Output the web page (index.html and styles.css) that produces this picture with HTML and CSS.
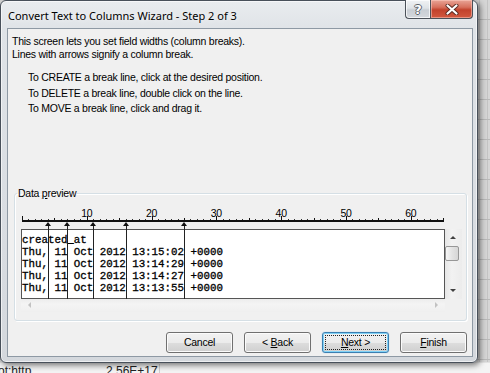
FILE: index.html
```html
<!DOCTYPE html>
<html lang="en">
<head>
  <meta charset="UTF-8">
  <title>Convert Text to Columns Wizard</title>
  <link rel="stylesheet" href="styles.css">
</head>
<body>

  <div class="desktop">

    <!-- Spreadsheet behind the dialog -->
    <div class="sheet">
      <div class="sheet-row">
        <span class="cell cell-a">ot:http</span>
        <span class="cell cell-b">2.56E+17</span>
        <span class="cell cell-c"></span>
      </div>
    </div>

    <!-- Wizard window -->
    <div class="dialog">
      <div class="titlebar">
        <span class="title">Convert Text to Columns Wizard - Step 2 of 3</span>
        <div class="caption-buttons">
          <button class="cap cap-help">?</button>
          <button class="cap cap-close">
            <svg width="14" height="11" viewBox="0 0 14 11">
              <path d="M2.5 1.5 L11.5 9.5 M11.5 1.5 L2.5 9.5" stroke="#5a2a22" stroke-width="4" stroke-linecap="round"/>
              <path d="M2.5 1.5 L11.5 9.5 M11.5 1.5 L2.5 9.5" stroke="#ffffff" stroke-width="2.2" stroke-linecap="round"/>
            </svg>
          </button>
        </div>
      </div>

      <div class="client">
        <p class="intro">
          This screen lets you set field widths (column breaks).<br>
          Lines with arrows signify a column break.
        </p>

        <ul class="steps">
          <li>To CREATE a break line, click at the desired position.</li>
          <li>To DELETE a break line, double click on the line.</li>
          <li>To MOVE a break line, click and drag it.</li>
        </ul>

        <fieldset class="group">
          <legend>Data <u>p</u>review</legend>

          <div class="preview">
            <div class="ruler">
              <div class="ruler-labels">
                <span>10</span><span>20</span><span>30</span>
                <span>40</span><span>50</span><span>60</span>
              </div>
              <div class="ruler-ticks"></div>
            </div>

            <div class="preview-body">
              <pre class="data">created_at
Thu, 11 Oct 2012 13:15:02 +0000
Thu, 11 Oct 2012 13:14:29 +0000
Thu, 11 Oct 2012 13:14:27 +0000
Thu, 11 Oct 2012 13:13:55 +0000</pre>
              <div class="vscroll">
                <div class="arrow-btn"><span class="tri tri-up"></span></div>
                <div class="thumb"></div>
                <div class="track"></div>
                <div class="arrow-btn"><span class="tri tri-down"></span></div>
              </div>
            </div>

            <div class="hscroll">
              <span class="tri tri-left"></span>
              <span class="tri tri-right"></span>
            </div>

            <!-- column breaks, by character position -->
            <div class="break" style="--col: 4"></div>
            <div class="break" style="--col: 7"></div>
            <div class="break" style="--col: 11"></div>
            <div class="break" style="--col: 16"></div>
            <div class="break" style="--col: 25"></div>
          </div>
        </fieldset>

        <div class="buttons">
          <button class="btn">Cancel</button>
          <button class="btn">&lt; <u>B</u>ack</button>
          <button class="btn btn-default"><span class="focus"><u>N</u>ext &gt;</span></button>
          <button class="btn"><u>F</u>inish</button>
        </div>
      </div>
    </div>

  </div>

</body>
</html>
```

FILE: styles.css
```css
* {
  box-sizing: border-box;
  margin: 0;
  padding: 0;
}

body {
  font-family: 'Liberation Sans', Arial, sans-serif;
  font-size: 10.5px;
  letter-spacing: -0.25px;
  color: #000;
  background: #d9d9d9;
}

.desktop {
  position: relative;
  width: 490px;
  height: 373px;
  overflow: hidden;
  background:
    repeating-linear-gradient(to bottom, transparent 0 19px, #b9b9b9 19px 20px),
    repeating-linear-gradient(to right, transparent 0 7px, #c4c4c4 7px 8px),
    #d6d6d6;
  display: flex;
  flex-direction: column;
  justify-content: flex-end;
}

/* spreadsheet row peeking out under the dialog */
.sheet {
  background: #f4f4f4;
  border-top: 1px solid #e2e2e2;
  padding-top: 1px;
}

.sheet-row {
  display: flex;
  height: 9px;
  overflow: visible;
}

.cell {
  font-size: 12px;
  letter-spacing: 0;
  line-height: 14px;
  color: #222;
  white-space: nowrap;
}

.cell-a {
  width: 108px;
  margin-left: -2px;
}

.cell-b {
  width: 54px;
  border-right: 1px solid #d0d0d0;
}

/* dialog window */
.dialog {
  position: absolute;
  left: 0;
  top: 0;
  width: 478px;
  height: 363px;
  border: 1px solid #48505a;
  border-radius: 6px;
  background: linear-gradient(to bottom, #e9ecef 0%, #dfe3e7 8%, #d9dde2 60%, #d4d8dd 100%);
  box-shadow: 2px 2px 6px rgba(0, 0, 0, 0.55), inset 0 0 0 1px rgba(255, 255, 255, 0.6);
  padding: 0 4px 5px 6px;
  display: flex;
  flex-direction: column;
}

.titlebar {
  height: 27px;
  display: flex;
  justify-content: space-between;
  align-items: flex-start;
}

.title {
  font-family: 'Noto Sans', sans-serif;
  font-size: 11px;
  letter-spacing: 0;
  line-height: 16px;
  padding: 7px 0 0 1px;
  color: #000;
  text-shadow: 0 0 6px rgba(255, 255, 255, 0.9);
}

.caption-buttons {
  display: flex;
  margin-top: -1px;
}

.cap {
  height: 19px;
  border: 1px solid #4b5159;
  border-top: none;
  font-family: 'DejaVu Sans', sans-serif;
  cursor: pointer;
  display: flex;
  align-items: center;
  justify-content: center;
}

.cap-help {
  width: 25px;
  border-right: none;
  border-radius: 0 0 0 4px;
  background: linear-gradient(to bottom, #f0f2f4 0%, #dfe3e7 45%, #c9ced4 55%, #d4d8dd 100%);
  box-shadow: inset 0 0 0 1px rgba(255, 255, 255, 0.7);
  color: #fff;
  font-size: 13px;
  font-weight: bold;
  text-shadow: 1px 0 0 #5d636a, -1px 0 0 #5d636a, 0 1px 0 #5d636a, 0 -1px 0 #5d636a;
}

.cap-close {
  width: 43px;
  border-radius: 0 0 4px 0;
  background: linear-gradient(to bottom, #e9a597 0%, #d7705d 40%, #c2422c 55%, #d2583f 100%);
  box-shadow: inset 0 0 0 1px rgba(255, 210, 200, 0.5);
}

.client {
  flex: 1;
  background: #f0f0f0;
  border: 1px solid #8e99a4;
  display: flex;
  flex-direction: column;
}

.intro {
  padding: 6px 0 0 4px;
  line-height: 13px;
}

.steps {
  list-style: none;
  padding-left: 20px;
  margin-top: 9px;
  line-height: 15.5px;
}

/* data preview group */
.group {
  margin: 70px 5px 0 6px;
  border: 1px solid #d5dfe5;
  border-radius: 3px;
  padding: 0 0 8px 0;
  box-shadow: inset 1px 1px 0 #ffffff, 1px 1px 0 #ffffff;
}

.group legend {
  margin-left: 2px;
  padding: 0 1px;
  line-height: 13px;
}

.preview {
  position: relative;
  margin: 6px 0 0 6px;
  width: 441px;
}

.ruler {
  height: 23px;
}

.ruler-labels {
  display: flex;
  height: 10px;
  padding-left: 33.4px;
  line-height: 14px;
}

.ruler-labels span {
  width: 64.8px;
  flex: none;
  text-align: center;
}

.ruler-ticks {
  margin-left: 1px;
  width: 422px;
  height: 6px;
  background:
    linear-gradient(#111, #111) left bottom / 100% 2px no-repeat,
    repeating-linear-gradient(to right, #111 0 1px, transparent 1px 64.8px) left bottom / 100% 6px no-repeat,
    repeating-linear-gradient(to right, #111 0 1px, transparent 1px 32.4px) left bottom / 100% 4px no-repeat,
    repeating-linear-gradient(to right, #333 0 1px, transparent 1px 6.48px) left bottom / 100% 3px no-repeat;
}

.preview-body {
  display: flex;
  height: 70px;
}

.data {
  width: 424px;
  border: 1px solid #555;
  background: #fff;
  font-family: 'Liberation Mono', 'Courier New', monospace;
  font-size: 10.8px;
  letter-spacing: 0;
  line-height: 12px;
  padding-top: 4px;
  overflow: hidden;
  -webkit-text-stroke: 0.3px #000;
}

.vscroll {
  width: 17px;
  background: linear-gradient(to right, #e6e6e6, #f2f2f2 40%, #ececec);
  display: flex;
  flex-direction: column;
}

.arrow-btn {
  height: 17px;
  display: flex;
  align-items: center;
  justify-content: center;
}

.thumb {
  height: 15px;
  margin: 0 3px 0 0;
  border: 1px solid #979797;
  border-radius: 2px;
  background: linear-gradient(to right, #f6f6f6, #e3e3e3 50%, #d6d6d6);
}

.track {
  flex: 1;
}

.tri {
  width: 0;
  height: 0;
  display: inline-block;
}

.tri-up {
  border-left: 3px solid transparent;
  border-right: 3px solid transparent;
  border-bottom: 3px solid #404040;
  margin-right: 2px;
}

.tri-down {
  border-left: 3px solid transparent;
  border-right: 3px solid transparent;
  border-top: 3px solid #404040;
  margin-right: 2px;
}

.hscroll {
  width: 424px;
  height: 13px;
  background: linear-gradient(to bottom, #ececec, #f4f4f4 40%, #efefef);
  display: flex;
  justify-content: space-between;
  align-items: center;
  padding: 0 7px;
}

.tri-left {
  border-top: 3px solid transparent;
  border-bottom: 3px solid transparent;
  border-right: 3px solid #c2c2c2;
}

.tri-right {
  border-top: 3px solid transparent;
  border-bottom: 3px solid transparent;
  border-left: 3px solid #c2c2c2;
}

/* column break line with its arrow on the ruler */
.break {
  position: absolute;
  top: 16px;
  left: calc(1px + var(--col) * 6.48px - 3px);
  width: 7px;
  height: 77px;
  background: linear-gradient(#222, #222) 3px 3px / 1px 100% no-repeat;
}

.break::before {
  content: "";
  display: block;
  width: 0;
  height: 0;
  border-left: 3.5px solid transparent;
  border-right: 3.5px solid transparent;
  border-bottom: 4px solid #111;
}

/* bottom buttons */
.buttons {
  display: flex;
  justify-content: flex-end;
  gap: 11px;
  margin-top: 11px;
  padding-right: 5px;
}

.btn {
  width: 67px;
  height: 21px;
  border: 1px solid #707070;
  border-radius: 3px;
  background: linear-gradient(to bottom, #f2f2f2 0%, #ebebeb 50%, #dddddd 51%, #cfcfcf 100%);
  box-shadow: inset 0 0 0 1px #fbfbfb;
  font-family: 'Liberation Sans', Arial, sans-serif;
  font-size: 10.5px;
  letter-spacing: -0.25px;
  color: #000;
  cursor: pointer;
}

.btn-default {
  border-color: #3c7fb1;
  box-shadow: inset 0 0 0 1px #7fd2f7, 0 0 1px #66b3e8;
  padding: 2px;
}

.focus {
  display: flex;
  height: 100%;
  align-items: center;
  justify-content: center;
  border: 1px dotted #222;
}
```
